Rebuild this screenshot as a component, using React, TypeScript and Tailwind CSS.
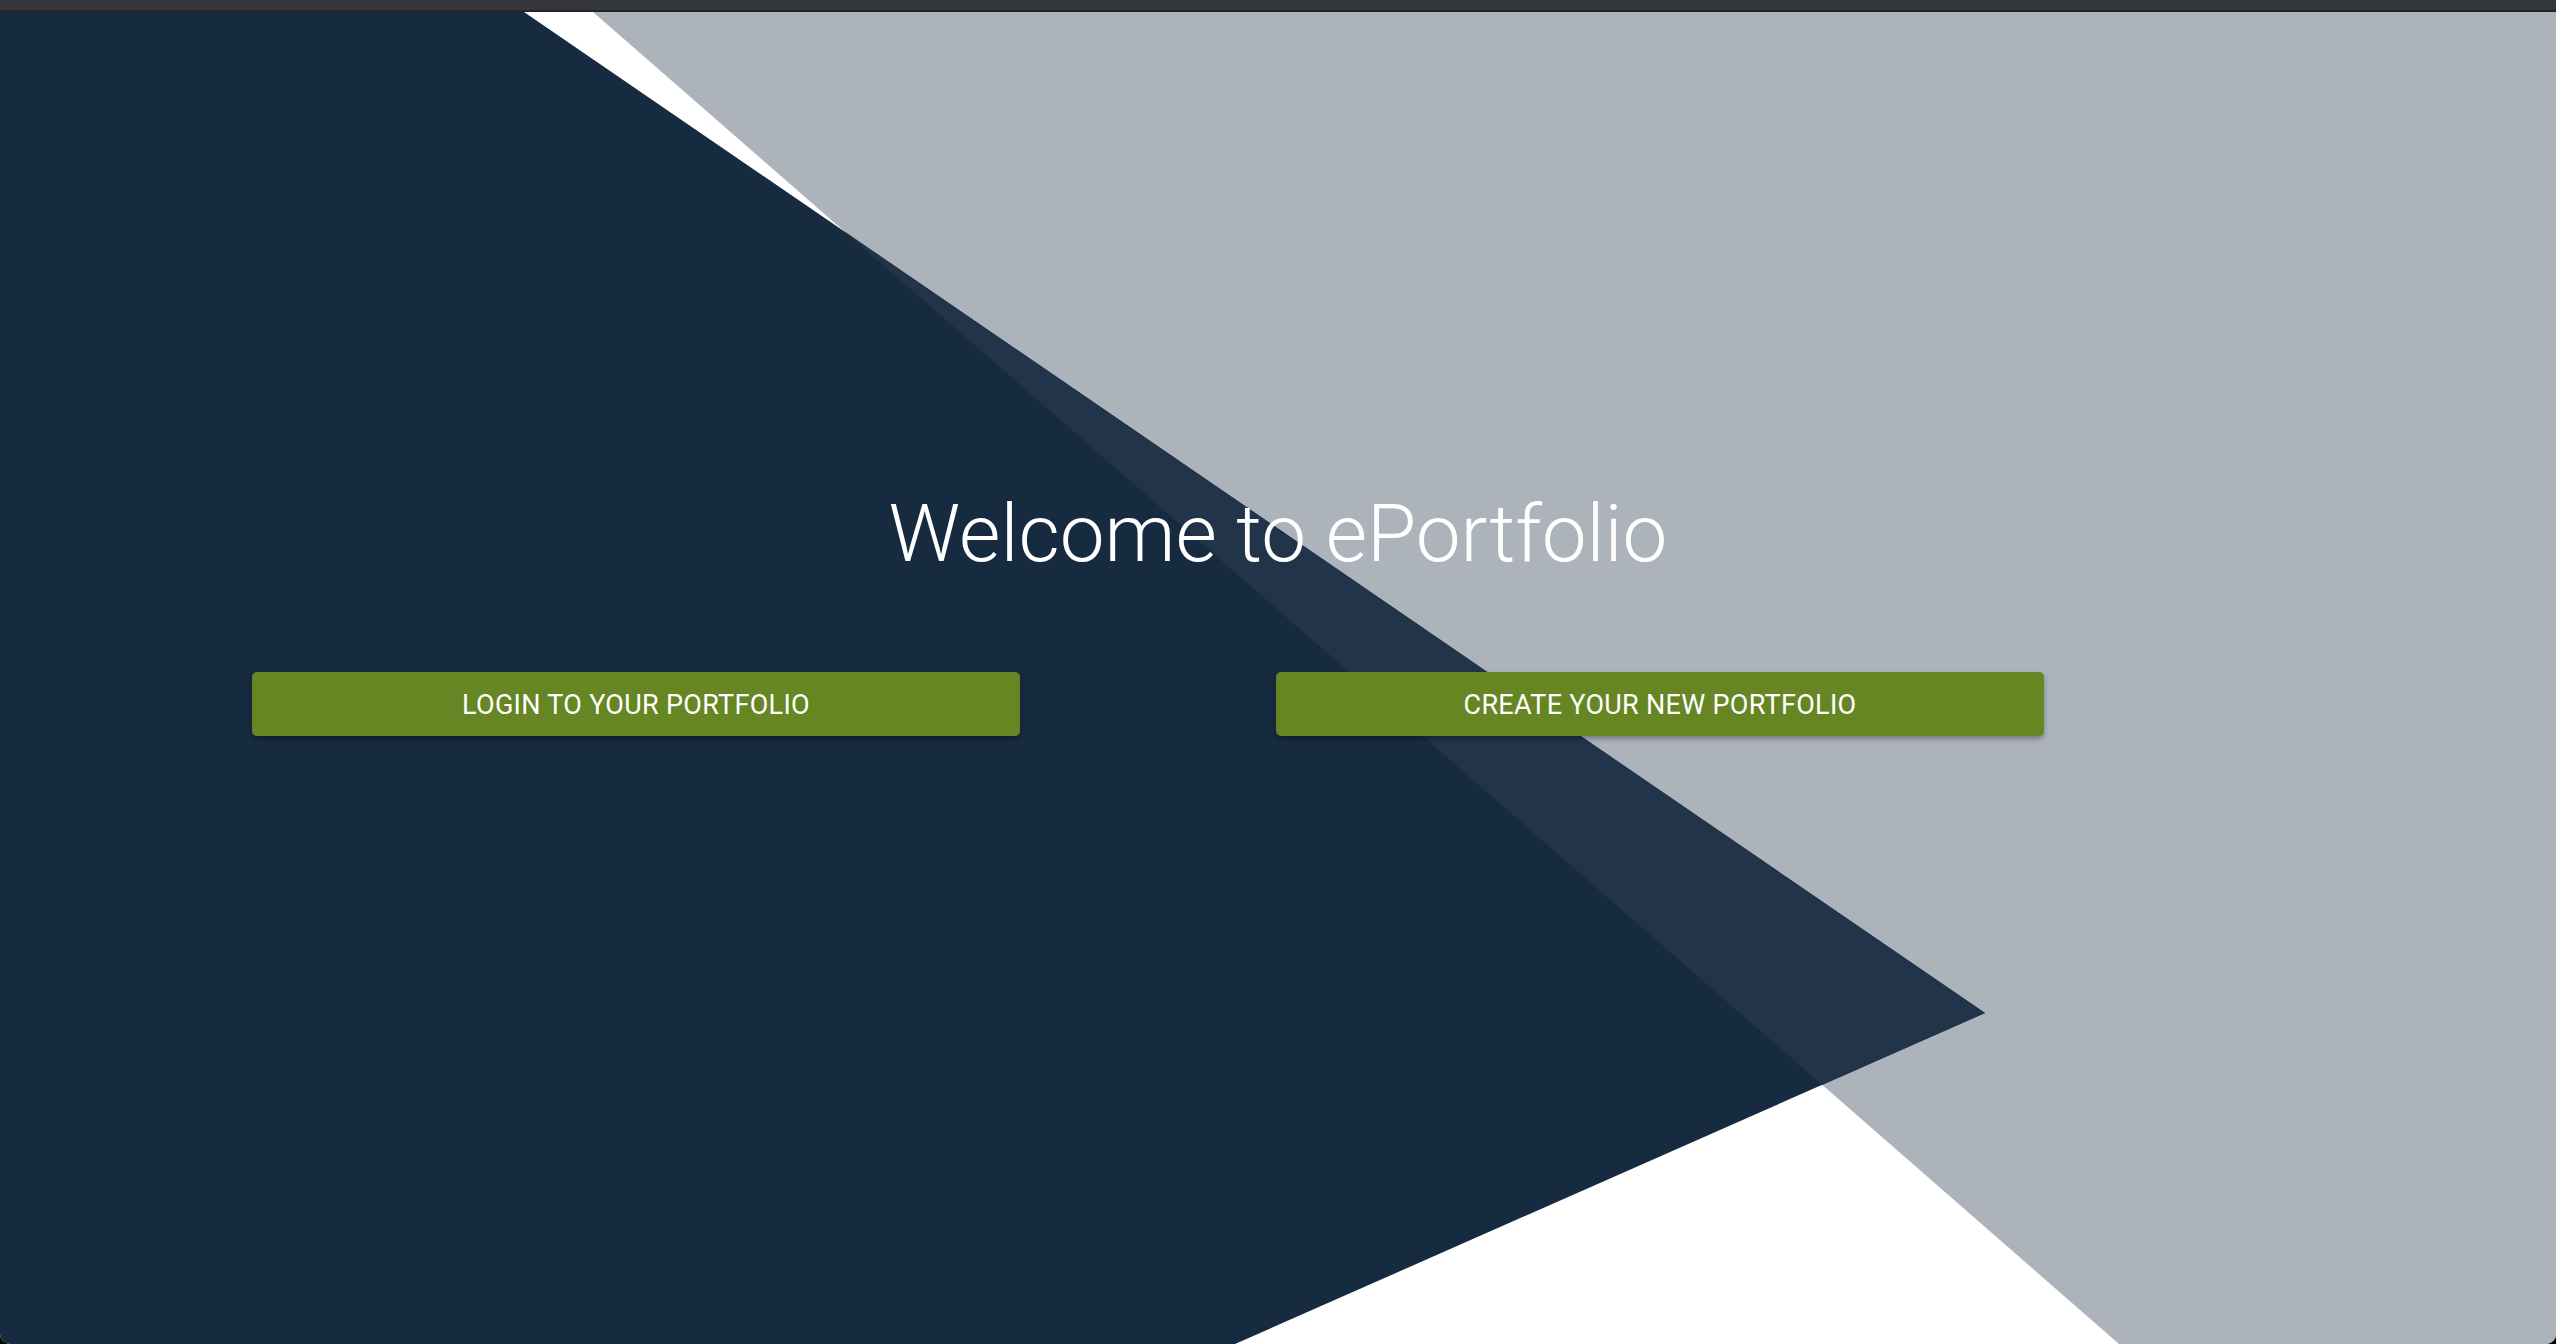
import React from "react";

// backdrop polygons, in page coordinates (main area starts at y=12)
const GRAY = "593,12 2556,12 2556,1344 2119,1344";
const NAVY = "0,12 524,12 1985,1013 1235,1344 0,1344";
const NAVY_LIGHT = "844.8,231.8 1985,1013 1822.2,1084.9";

function Backdrop() {
    return (
        <svg
            className="absolute inset-0 h-full w-full"
            viewBox="0 12 2556 1332"
            preserveAspectRatio="none"
        >
            <rect x="0" y="12" width="2556" height="1332" fill="#ffffff" />
            <polygon points={GRAY} fill="#adb3bb" />
            <polygon points={NAVY} fill="#172b40" />
            <polygon points={NAVY_LIGHT} fill="#21344a" />
        </svg>
    );
}

function ActionButton({ label }: { label: string }) {
    return (
        <button
            type="button"
            className="w-[768px] h-[64px] pt-[2px] rounded-[5px] bg-[#658623] text-white text-[27px] tracking-[0.3px] uppercase shadow-[0_3px_5px_rgba(0,0,0,0.3)] flex items-center justify-center"
        >
            {label}
        </button>
    );
}

export default function App() {
    return (
        <div className="w-[2556px] h-[1344px] bg-black flex flex-col overflow-hidden" style={{ fontFamily: "Roboto, 'Noto Sans', sans-serif" }}>
            <div className="h-[10px] bg-[#36373b]" />
            <div className="h-[2px] bg-[#232427]" />
            <main className="relative flex-1 overflow-hidden rounded-b-[10px]">
                <Backdrop />
                <div className="relative flex flex-col">
                    <h1 className="mt-[482px] text-center text-[80px] leading-none font-light text-white">
                        Welcome to ePortfolio
                    </h1>
                    <div className="mt-[98px] flex pl-[252px] gap-[256px]">
                        <ActionButton label="Login to your portfolio" />
                        <ActionButton label="Create your new portfolio" />
                    </div>
                </div>
            </main>
        </div>
    );
}
